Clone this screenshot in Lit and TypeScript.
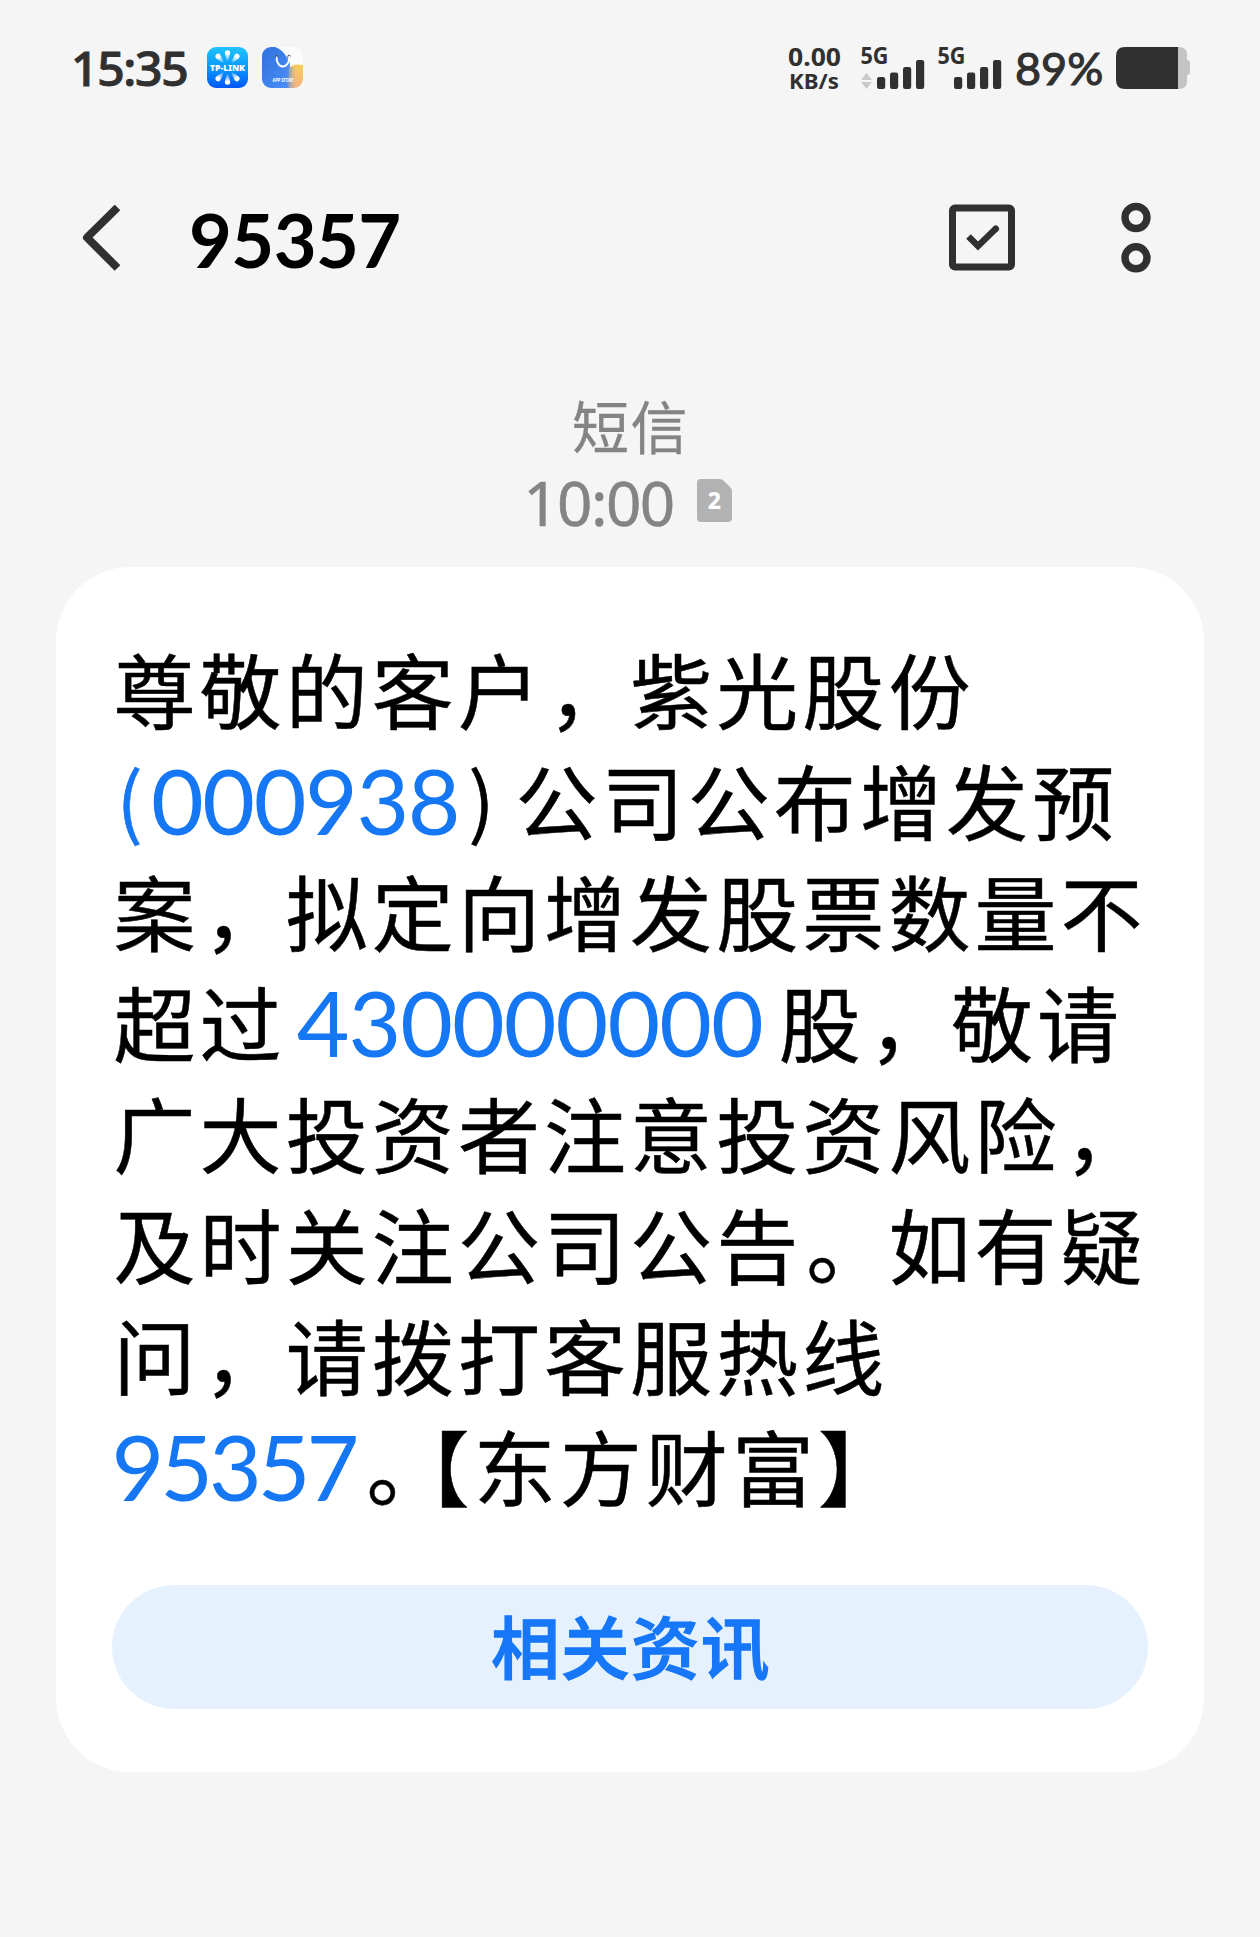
import { LitElement, html, svg, css } from "lit";
import { customElement, property } from "lit/decorators.js";

interface Run {
  text: string;
  kind?: "link" | "paren" | "paren-link" | "amount" | "phone" | "stop" | "open" | "mark";
}

const MESSAGE: Run[][] = [
  [{ text: "尊敬的客户" }, { text: "，", kind: "mark" }, { text: "紫光股份" }],
  [
    { text: "(", kind: "paren-link" },
    { text: "000938", kind: "link" },
    { text: ")", kind: "paren" },
    { text: "公司公布增发预" },
  ],
  [{ text: "案" }, { text: "，", kind: "mark" }, { text: "拟定向增发股票数量不" }],
  [
    { text: "超过" },
    { text: "430000000", kind: "amount" },
    { text: "股" },
    { text: "，", kind: "mark" },
    { text: "敬请" },
  ],
  [{ text: "广大投资者注意投资风险" }, { text: "，", kind: "mark" }],
  [{ text: "及时关注公司公告" }, { text: "。", kind: "mark" }, { text: "如有疑" }],
  [{ text: "问" }, { text: "，", kind: "mark" }, { text: "请拨打客服热线" }],
  [
    { text: "95357", kind: "phone" },
    { text: "。", kind: "stop" },
    { text: "【", kind: "open" },
    { text: "东方财富】" },
  ],
];

@customElement("signal-meter")
class SignalMeter extends LitElement {
  @property({ type: Boolean }) arrows = false;

  static styles = css`
    :host { display: block; }
    svg { display: block; overflow: visible; }
    .tag { font: 700 23.5px "Noto Sans", sans-serif; fill: #303030; }
    .bar { fill: #303030; }
    .arrow { fill: #cacaca; }
  `;

  render() {
    const tops = [30, 25.5, 20, 13];
    return html`<svg width="65" height="42" viewBox="0 0 65 42">
      <text class="tag" x="-0.5" y="17" textLength="28" lengthAdjust="spacingAndGlyphs">5G</text>
      ${this.arrows
        ? svg`<path class="arrow" d="M5.500 26l5.500 7H0zM5.500 42l5.500-7H0z" />`
        : null}
      ${tops.map(
        (top, i) =>
          svg`<rect class="bar" x=${16 + i * 13} y=${top} width="8.2" height=${42 - top} rx="2.2" />`
      )}
    </svg>`;
  }
}

@customElement("status-bar")
class StatusBar extends LitElement {
  static styles = css`
    :host {
      display: flex; height: 42px; padding: 47px 70px 0 71px; align-items: flex-start;
      color: #303030; font-family: "Noto Sans", sans-serif;
    }
    svg { display: block; flex: none; overflow: visible; }
    .clock { width: 136px; font-size: 48px; font-weight: 500; line-height: 42px; letter-spacing: -1.3px; -webkit-text-stroke: 1px #303030; }
    .clock, .percent { white-space: nowrap; }
    .apps { display: flex; gap: 14px; flex: 1; }
    .speed { width: 73px; margin-left: 1px; }
    .speed-text { font: 700 25px "Noto Sans", sans-serif; fill: #303030; }
    .unit { font-size: 22px; }
    .second { margin-left: 12px; }
    .percent { width: 101px; margin-left: 12px; font: 400 45px/42px Lato, sans-serif; -webkit-text-stroke: 1.1px #303030; }
    .brand { font: 900 8.5px "Noto Sans", sans-serif; fill: #fff; }
    .store { font: 700 4.500px "Noto Sans", sans-serif; fill: #fff; }
  `;

  render() {
    const petals = [0, 40, 140, 180, 220, 320];
    return html`
      <div class="clock">15:35</div>
      <div class="apps">
        <svg width="41" height="41" viewBox="0 0 41 41">
          <defs>
            <linearGradient id="sky" x2="0" y2="1">
              <stop offset="0" stop-color="#20c3fb" />
              <stop offset=".55" stop-color="#0794fc" />
              <stop offset="1" stop-color="#0356f5" />
            </linearGradient>
            <linearGradient id="ray" x2="0" y2="1">
              <stop offset=".3" stop-color="#fff" />
              <stop offset="1" stop-color="#fff" stop-opacity=".1" />
            </linearGradient>
          </defs>
          <rect width="41" height="41" rx="9" fill="url(#sky)" />
          ${petals.map(
            (angle) =>
              svg`<path d="M20.5 3.300a2.700 2.700 0 0 1 2.700 2.700l-1.900 8h-1.600l-1.900-8a2.700 2.700 0 0 1 2.700-2.700z" fill="url(#ray)" transform=${`rotate(${angle} 20.500 20.500)`} />`
          )}
          <text class="brand" x="3" y="23.500" textLength="35" lengthAdjust="spacingAndGlyphs">TP-LINK</text>
        </svg>
        <svg width="41" height="41" viewBox="0 0 41 41">
          <defs>
            <linearGradient id="blue" x2="1" y2="1">
              <stop offset="0" stop-color="#2f72dd" /><stop offset="1" stop-color="#4b8ef8" />
            </linearGradient>
            <linearGradient id="warm" x1=".6" x2=".3" y2="1">
              <stop offset="0" stop-color="#f8cf57" /><stop offset="1" stop-color="#f4a796" />
            </linearGradient>
            <linearGradient id="blend" x2="1" y2="0">
              <stop offset="0" stop-color="#4586f4" /><stop offset="1" stop-color="#b9bd92" stop-opacity=".1" />
            </linearGradient>
            <clipPath id="tile"><rect width="41" height="41" rx="9" /></clipPath>
          </defs>
          <g clip-path="url(#tile)">
            <rect width="41" height="41" fill="#fbfbfb" />
            <circle cx="36" cy="33" r="15.500" fill="url(#warm)" />
            <path d="M0 0h13c7 2 12 9 15 17l-3 24H0z" fill="url(#blue)" />
            <path d="M24.500 20h9v21h-9z" fill="url(#blend)" />
          </g>
          <path d="M14.500 10.500a6.400 9 0 0 0 12.800 0" fill="none" stroke="#fff" stroke-width="2" stroke-linecap="round" />
          <path d="M13.300 11V9.500a1.300 1.300 0 0 1 2.600 0M25.800 11V9.500a1.300 1.300 0 0 1 2.600 0" fill="none" stroke="#51586b" stroke-width="1" />
          <text class="store" x="10.500" y="35" textLength="21" lengthAdjust="spacingAndGlyphs">APP STORE</text>
        </svg>
      </div>
      <svg class="speed" width="73" height="44" viewBox="0 0 73 44">
        <text class="speed-text" x="0" y="18.500" textLength="53" lengthAdjust="spacingAndGlyphs">0.00</text>
        <text class="speed-text unit" x="1" y="42" textLength="50" lengthAdjust="spacingAndGlyphs">KB/s</text>
      </svg>
      <signal-meter arrows></signal-meter>
      <signal-meter class="second"></signal-meter>
      <div class="percent">89%</div>
      <svg width="74" height="42" viewBox="0 0 74 42">
        <path d="M60 0h3q8 0 8 8v5q3 0 3 3v9q0 3-3 3v6q0 8-8 8h-3z" fill="#c4c4c4" />
        <path d="M9 0h53v42H9q-9 0-9-9V9q0-9 9-9z" fill="#303030" />
      </svg>
    `;
  }
}

@customElement("title-bar")
class TitleBar extends LitElement {
  static styles = css`
    :host { display: flex; align-items: center; height: 80px; margin-top: 109px; padding: 0 108px 0 81px; }
    svg { display: block; flex: none; fill: none; stroke: #303030; }
    .title {
      flex: 1; margin: 0 0 0 68px; color: #000; letter-spacing: -0.600px;
      font: 700 74px/80px Lato, sans-serif; padding-top: 3px;
    }
    .more { margin-left: 104px; }
  `;

  render() {
    return html`
      <svg width="40" height="66" viewBox="0 0 40 66" stroke-width="8" stroke-linejoin="round">
        <path d="M36.500 2.500L6 32.500L36.500 63" />
      </svg>
      <h1 class="title">95357</h1>
      <svg width="68" height="68" viewBox="0 0 68 68" stroke-width="7">
        <rect x="4.500" y="4" width="59" height="59" rx="2.500" />
        <path d="M20.500 32.500L30 42L48 24.500" stroke-width="6.500" />
        <path d="M47.800 24.700l.01-.01" stroke-width="6.500" stroke-linecap="round" />
      </svg>
      <svg class="more" width="32" height="72" viewBox="0 0 32 72" stroke-width="7.400">
        <circle cx="16" cy="15.500" r="11" /><circle cx="16" cy="55.800" r="11" />
      </svg>
    `;
  }
}

@customElement("message-card")
class MessageCard extends LitElement {
  static styles = css`
    :host {
      display: flex; flex-direction: column; box-sizing: border-box;
      height: 1205px; margin: 0 56px; padding: 65px 56px 63px; border-radius: 74px; background: #fff;
    }
    .body {
      flex: 1; margin: 0; color: #000; font: 400 82px/111px "Noto Sans CJK SC", sans-serif;
      letter-spacing: 4.100px; text-spacing-trim: space-all; -webkit-text-stroke: 0.500px currentColor;
    }
    .line { display: flex; height: 111px; white-space: nowrap; padding-left: 1.500px; }
    .link, .amount, .phone, .paren-link { color: #1677f5; }
    .link, .amount, .phone { font-family: Lato, sans-serif; font-size: 91px; line-height: 114px; -webkit-text-stroke: 0; }
    .link { letter-spacing: -1.400px; margin-left: 8px; }
    .amount { letter-spacing: -1px; margin: 0 16px 0 11px; }
    .phone { letter-spacing: -4px; margin-left: -2px; }
    .paren, .paren-link { font-family: "Noto Sans CJK SC", sans-serif; font-size: 78px; line-height: 108px; letter-spacing: 0; }
    .paren-link { margin-left: 3px; }
    .paren { margin: 0 21px 0 9px; }
    .mark { margin: 0 -4px 0 4px; }
    .stop { margin-left: 11px; margin-right: -18px; }
    .open { margin-left: -47px; }
    .action {
      height: 124px; border: 0; border-radius: 62px; background: #e5f2fe; color: #1677f8;
      font: 500 68.500px/118px "Noto Sans CJK SC", sans-serif; letter-spacing: 1.400px; padding: 0 0 4px 2px;
      -webkit-text-stroke: 1.400px #1677f8;
    }
  `;

  render() {
    return html`
      <div class="body">
        ${MESSAGE.map(
          (line) => html`<div class="line">
            ${line.map((run) => html`<span class=${run.kind ?? "plain"}>${run.text}</span>`)}
          </div>`
        )}
      </div>
      <button class="action">相关资讯</button>
    `;
  }
}

@customElement("app-root")
class AppRoot extends LitElement {
  static styles = css`
    :host { display: block; height: 1937px; background: #f5f5f5; overflow: hidden; }
    .meta {
      display: flex; flex-direction: column; align-items: center; height: 173px; padding-top: 116px;
      color: #848484;
    }
    .source { height: 72px; font: 400 57px/60px "Noto Sans CJK SC", sans-serif; letter-spacing: 1.500px; -webkit-text-stroke: 0.300px #848484; padding-left: 1px; }
    .time { display: flex; align-items: center; gap: 23px; height: 75px; margin-top: -1px; padding-right: 5px; font: 400 62px/75px "Noto Sans", sans-serif; }
    .clock { letter-spacing: -1.600px; -webkit-text-stroke: 0.500px #848484; }
    .sim { display: block; margin-bottom: 4px; }
    .digit { font: 800 23px "Noto Sans", sans-serif; fill: #fff; }
  `;

  render() {
    return html`
      <status-bar></status-bar>
      <title-bar></title-bar>
      <section class="meta">
        <div class="source">短信</div>
        <div class="time">
          <span class="clock">10:00</span>
          <svg class="sim" width="35" height="43" viewBox="0 0 35 43">
            <path d="M4 0h19q2 0 3.500 1.500l7 7Q35 10 35 12v27q0 4-4 4H4q-4 0-4-4V4q0-4 4-4z" fill="#b2b2b2" />
            <text class="digit" x="17.500" y="30" text-anchor="middle">2</text>
          </svg>
        </div>
      </section>
      <message-card></message-card>
    `;
  }
}
